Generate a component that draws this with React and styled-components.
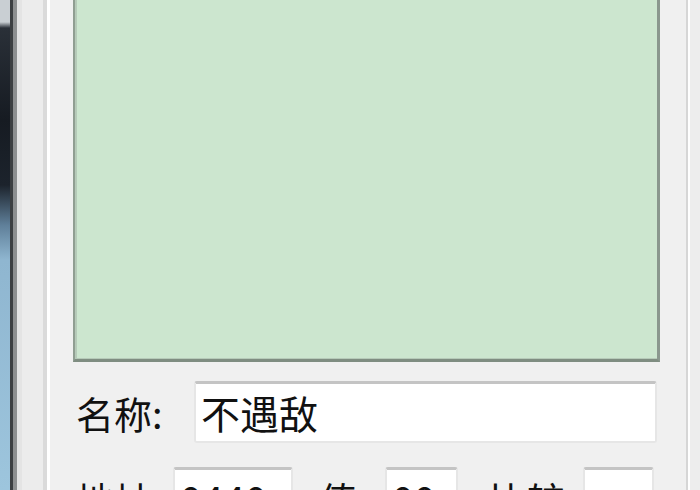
import React from 'react';
import styled, { createGlobalStyle } from 'styled-components';

const GlobalStyle = createGlobalStyle`
  html, body {
    margin: 0;
    padding: 0;
    overflow: hidden;
    background: #f0f0f0;
  }
`;

const Screen = styled.div`
  width: 700px;
  height: 490px;
  display: flex;
  overflow: hidden;
  font-family: "Noto Sans CJK SC", "Liberation Sans", sans-serif;
  color: #111;
`;

const Desktop = styled.div`
  width: 10px;
  flex: none;
  background: linear-gradient(
    to bottom,
    #c9cfd3 0px,
    #c9cfd3 22px,
    #2a3038 28px,
    #161b22 120px,
    #1c232c 185px,
    #5f7f99 225px,
    #8fb6d0 260px,
    #9dc5dd 490px
  );
`;

const WindowEdge = styled.div`
  width: 3px;
  flex: none;
  background: #3c3f42;
  border-right: 4px solid #8d8f90;
`;

const Frame = styled.div`
  width: 21px;
  flex: none;
  background: #ececec;
  border-left: 5px solid #e4e4e4;
  border-right: 4px solid #dadada;
  box-shadow: 3px 0 0 #ffffff;
  margin-right: 3px;
`;

const Client = styled.div`
  flex: 1;
  display: flex;
  flex-direction: column;
  background: #f0f0f0;
  padding-left: 23px;
  padding-right: 25px;
`;

const GreenPanel = styled.div`
  height: 359px;
  flex: none;
  background: #cce6cf;
  border-left: 2px solid #909e92;
  border-right: 3px solid #8a978e;
  border-bottom: 3px solid #7f8d81;
  box-shadow: inset 2px 0 0 #b6cab9, inset 0 -1px 0 #b6cab9;
`;

const Row = styled.div`
  display: flex;
  align-items: center;
  height: 62px;
  margin-top: ${(p) => p.$top}px;
`;

const Label = styled.span`
  flex: none;
  width: ${(p) => p.$w}px;
  margin-left: ${(p) => p.$ml || 0}px;
  font-size: 38px;
  line-height: 1;
  white-space: nowrap;
  padding-top: 2px;
`;

const Field = styled.div`
  flex: none;
  width: ${(p) => p.$w}px;
  height: 62px;
  box-sizing: border-box;
  background: #ffffff;
  border: 2px solid #e6e6e6;
  border-top: 3px solid #c4c4c4;
  border-radius: 3px;
  display: flex;
  align-items: center;
  padding-left: 5px;
  font-size: 39px;
  line-height: 1;
  white-space: nowrap;
  overflow: hidden;
`;

const RightEdge = styled.div`
  width: 12px;
  flex: none;
  background: #ededed;
  border-left: 2px solid #d6d6d6;
  box-shadow: inset 2px 0 0 #ffffff;
  margin-left: 1px;
`;

export default function App() {
  return (
    <>
      <GlobalStyle />
      <Screen>
        <Desktop />
        <WindowEdge />
        <Frame />
        <Client>
          <GreenPanel />
          <Row $top={19}>
            <Label $w={118} $ml={3}>名称:</Label>
            <Field $w={463}>不遇敌</Field>
          </Row>
          <Row $top={24}>
            <Label $w={97} $ml={3}>地址:</Label>
            <Field $w={120}>0440</Field>
            <Label $w={66} $ml={26}>值:</Label>
            <Field $w={73}>00</Field>
            <Label $w={94} $ml={31}>比较:</Label>
            <Field $w={71}></Field>
          </Row>
        </Client>
        <RightEdge />
      </Screen>
    </>
  );
}
